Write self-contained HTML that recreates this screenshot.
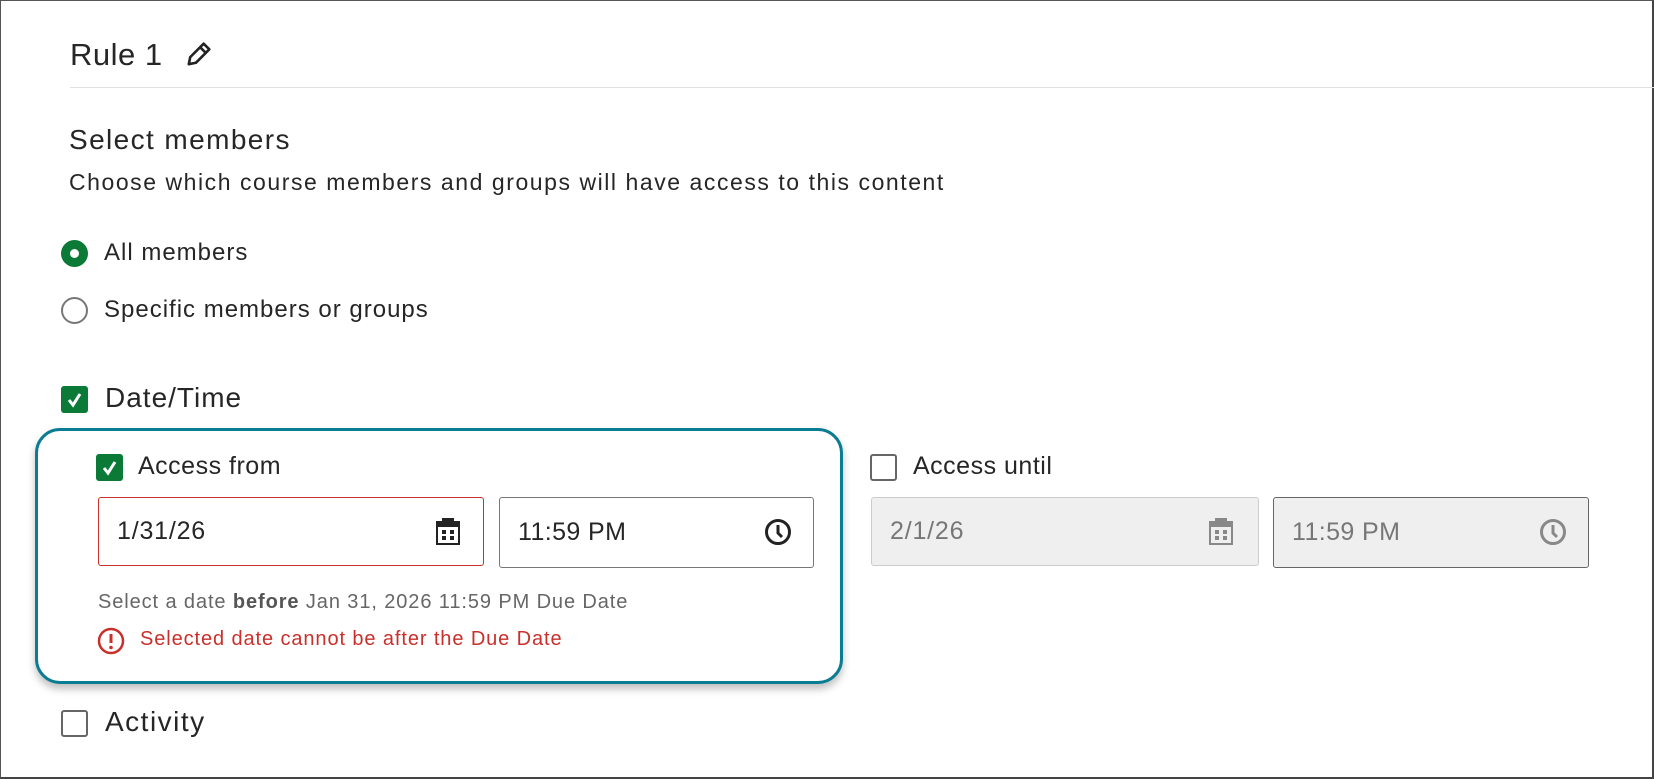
<!DOCTYPE html>
<html><head><style>
*{box-sizing:border-box;margin:0;padding:0}
body{width:1654px;height:779px;background:#fff;font-family:"Liberation Sans",sans-serif;color:#262626;position:relative;overflow:hidden}
.frame{position:absolute;left:0;top:0;width:1654px;height:779px;border:1px solid #555;border-right:2px solid #444;border-bottom:2px solid #444}
.abs{position:absolute;white-space:nowrap}
.cb{position:absolute;width:27px;height:27px;border-radius:3px}
.cb.on{background:#0b7a37}
.cb.off{border:2px solid #666;background:#fff}
.inp{position:absolute;border-radius:3px;padding-left:18px;display:flex;align-items:center}
</style></head><body>
<div class="frame"></div>
<div class="abs" style="left:70px;top:37px;font-size:31px;letter-spacing:0.5px">Rule 1</div>
<svg class="abs" style="left:183px;top:40px" width="30" height="30" viewBox="0 0 30 30"><g transform="rotate(45 15 15)" fill="none" stroke="#222" stroke-width="2.6" stroke-linejoin="round"><path d="M11 3h8v19l-4 6-4-6z"/><path d="M11 8h8"/></g></svg>
<div class="abs" style="left:70px;top:87px;width:1584px;height:1px;background:#e0e0e0"></div>
<div class="abs" style="left:69px;top:124px;font-size:28px;letter-spacing:1.4px">Select members</div>
<div class="abs" style="left:69px;top:169px;font-size:23px;letter-spacing:1.55px">Choose which course members and groups will have access to this content</div>
<div class="abs" style="left:61px;top:240px;width:27px;height:27px;border-radius:50%;background:#0b7a37"><div style="position:absolute;left:9px;top:9px;width:9px;height:9px;border-radius:50%;background:#fff"></div></div>
<div class="abs" style="left:104px;top:239px;font-size:24px;letter-spacing:1px">All members</div>
<div class="abs" style="left:61px;top:297px;width:27px;height:27px;border-radius:50%;border:2px solid #777"></div>
<div class="abs" style="left:104px;top:296px;font-size:24px;letter-spacing:1px">Specific members or groups</div>
<div class="cb on" style="left:61px;top:386px"><svg width="27" height="27"><path d="M8 14l4 5 7-11" fill="none" stroke="#fff" stroke-width="3"/></svg></div>
<div class="abs" style="left:105px;top:382px;font-size:28px;letter-spacing:1px">Date/Time</div>
<div class="abs" style="left:35px;top:428px;width:808px;height:256px;border:3px solid #0b7d93;border-radius:25px;box-shadow:0 5px 8px rgba(0,0,0,0.25)"></div>
<div class="cb on" style="left:96px;top:454px"><svg width="27" height="27"><path d="M8 14l4 5 7-11" fill="none" stroke="#fff" stroke-width="3"/></svg></div>
<div class="abs" style="left:138px;top:452px;font-size:25px;letter-spacing:0.5px">Access from</div>
<div class="inp" style="left:98px;top:497px;width:386px;height:69px;border:1px solid #c9302c;font-size:25px;letter-spacing:0.8px">1/31/26</div>
<svg class="abs" style="left:434px;top:517px" width="28" height="30" viewBox="0 0 28 30"><rect x="2" y="4" width="24" height="24" fill="#222"/><rect x="4" y="10" width="20" height="16" fill="#fff"/><rect x="8" y="1" width="12" height="4" fill="#222"/><g fill="#222"><rect x="8" y="13" width="4" height="4"/><rect x="16" y="13" width="4" height="4"/><rect x="8" y="19" width="4" height="4"/><rect x="16" y="19" width="4" height="4"/></g></svg>
<div class="inp" style="left:499px;top:497px;width:315px;height:71px;border:1px solid #777;font-size:25px;letter-spacing:0.4px">11:59 PM</div>
<svg class="abs" style="left:763px;top:517px" width="30" height="30" viewBox="0 0 30 30"><circle cx="15" cy="15" r="11.5" fill="none" stroke="#222" stroke-width="3"/><path d="M15 8v8l4 4" fill="none" stroke="#222" stroke-width="3"/></svg>
<div class="abs" style="left:98px;top:591px;font-size:20px;letter-spacing:0.9px;color:#666">Select a date <b style="color:#555">before</b> Jan 31, 2026 11:59 PM Due Date</div>
<svg class="abs" style="left:97px;top:627px" width="28" height="28" viewBox="0 0 28 28"><circle cx="14" cy="14" r="12" fill="none" stroke="#c9302c" stroke-width="2.5"/><path d="M14 7v9" stroke="#c9302c" stroke-width="3"/><circle cx="14" cy="20.5" r="1.8" fill="#c9302c"/></svg>
<div class="abs" style="left:140px;top:628px;font-size:20px;letter-spacing:0.9px;color:#c9302c">Selected date cannot be after the Due Date</div>
<div class="cb off" style="left:870px;top:454px"></div>
<div class="abs" style="left:913px;top:452px;font-size:25px;letter-spacing:0.5px">Access until</div>
<div class="inp" style="left:871px;top:497px;width:388px;height:69px;border:1px solid #ccc;background:#efefef;color:#777;font-size:25px;letter-spacing:0.8px">2/1/26</div>
<svg class="abs" style="left:1207px;top:517px" width="28" height="30" viewBox="0 0 28 30"><rect x="2" y="4" width="24" height="24" fill="#888"/><rect x="4" y="10" width="20" height="16" fill="#efefef"/><rect x="8" y="1" width="12" height="4" fill="#888"/><g fill="#888"><rect x="8" y="13" width="4" height="4"/><rect x="16" y="13" width="4" height="4"/><rect x="8" y="19" width="4" height="4"/><rect x="16" y="19" width="4" height="4"/></g></svg>
<div class="inp" style="left:1273px;top:497px;width:316px;height:71px;border:1px solid #666;background:#efefef;color:#777;font-size:25px;letter-spacing:0.4px">11:59 PM</div>
<svg class="abs" style="left:1538px;top:517px" width="30" height="30" viewBox="0 0 30 30"><circle cx="15" cy="15" r="11.5" fill="none" stroke="#888" stroke-width="3"/><path d="M15 8v8l4 4" fill="none" stroke="#888" stroke-width="3"/></svg>
<div class="cb off" style="left:61px;top:710px"></div>
<div class="abs" style="left:105px;top:706px;font-size:28px;letter-spacing:1.5px">Activity</div>
</body></html>
